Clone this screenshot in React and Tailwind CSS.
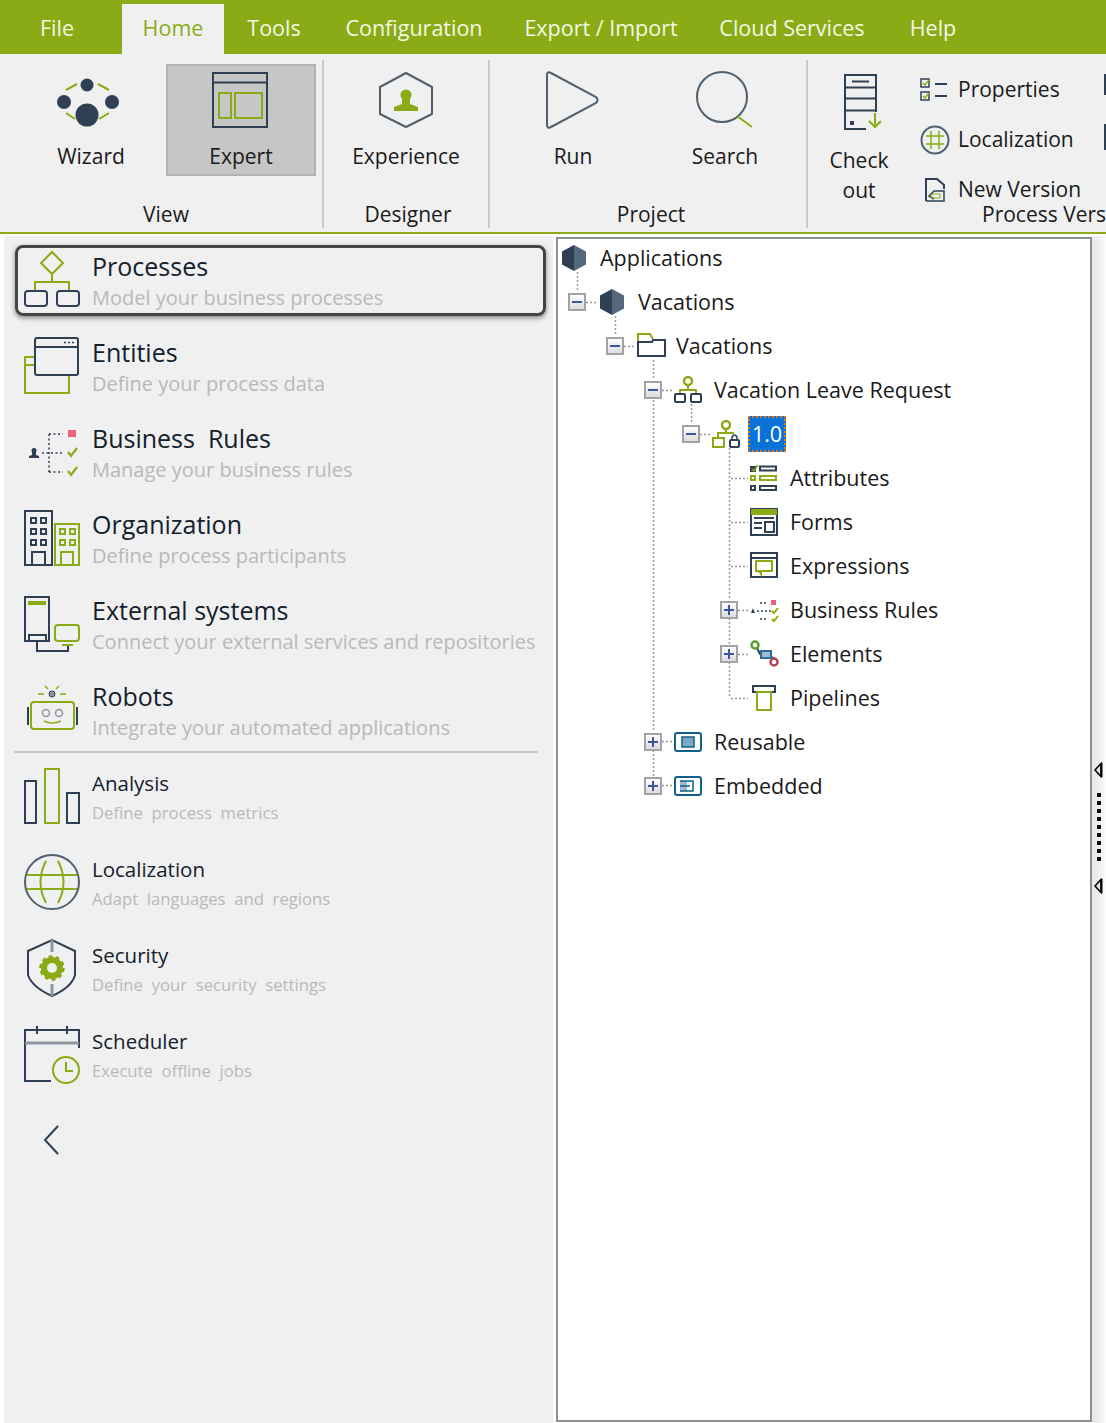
import React from 'react';

const NAVY = '#2f4054';
const GREEN = '#8aab16';
const GRAY = '#8d96a0';
const RING = '#50606f';

const tabs = [
  { label: 'File', w: 'w-[114px] mr-[8px]' },
  { label: 'Home', w: 'w-[102px]', active: true },
  { label: 'Tools', w: 'w-[100px]' },
  { label: 'Configuration', w: 'w-[180px]' },
  { label: 'Export / Import', w: 'w-[194px]' },
  { label: 'Cloud Services', w: 'w-[188px]' },
  { label: 'Help', w: 'w-[94px]' },
];

// Ribbon icons
const WizardIcon = () => (
  <svg width="70" height="60" viewBox="56 70 70 60" fill="none">
    <path d="M66 90 L77 84 M98 84 L109 90 M66 113 L75 119 M99 119 L109 113" stroke={GREEN} strokeWidth="2" />
    <circle cx="87" cy="85" r="6.500" fill={NAVY} />
    <circle cx="64" cy="102" r="7" fill={NAVY} />
    <circle cx="112" cy="102" r="7" fill={NAVY} />
    <circle cx="87" cy="115" r="11.500" fill={NAVY} />
  </svg>
);

const ExpertIcon = () => (
  <svg width="60" height="60" viewBox="211 70 60 60" fill="none">
    <rect x="213" y="73" width="54" height="54" stroke={NAVY} strokeWidth="2" />
    <path d="M213 82.500H267" stroke={NAVY} strokeWidth="2" />
    <rect x="219" y="93" width="12" height="25" stroke={GREEN} strokeWidth="2" />
    <rect x="235" y="93" width="27" height="25" stroke={GREEN} strokeWidth="2" />
  </svg>
);

const ExperienceIcon = () => (
  <svg width="60" height="60" viewBox="376 70 60 60" fill="none">
    <path d="M406 73 L432 87 V114 L406 127 L380 114 V87 Z" stroke={RING} strokeWidth="2" strokeLinejoin="round" />
    <circle cx="406" cy="95" r="5.500" fill={GREEN} />
    <path d="M402 99 H410 V104 L418 107 V111 H394 V107 L402 104 Z" fill={GREEN} />
  </svg>
);

const RunIcon = () => (
  <svg width="60" height="60" viewBox="543 70 60 60" fill="none">
    <path d="M547 75 Q547 71 551 73 L596 97 Q599 100 596 103 L551 127 Q547 129 547 125 Z" stroke={RING} strokeWidth="2" />
  </svg>
);

const SearchIcon = () => (
  <svg width="64" height="60" viewBox="693 70 64 60" fill="none">
    <circle cx="722" cy="97" r="25" stroke={RING} strokeWidth="2" />
    <path d="M737 116 L752 127" stroke={GREEN} strokeWidth="2" />
  </svg>
);

const CheckOutIcon = () => (
  <svg width="44" height="60" viewBox="837 70 44 60" fill="none">
    <path d="M876 112 V75 H845 V129 H866" stroke={NAVY} strokeWidth="2" />
    <path d="M845 87.500 H876 M845 98.500 H876 M845 110.500 H876" stroke={NAVY} strokeWidth="2" />
    <path d="M852 81.500 H869" stroke={NAVY} strokeWidth="2" />
    <rect x="850" y="121" width="4" height="4" fill={NAVY} />
    <path d="M875 113 V127 M869 121 L875 127 L881 121" stroke={GREEN} strokeWidth="2" />
  </svg>
);

const PropertiesIcon = () => (
  <svg width="28" height="24" viewBox="0 0 28 24" fill="none">
    <rect x="1" y="1" width="8" height="8" stroke={NAVY} strokeWidth="1.500" />
    <rect x="1" y="14" width="8" height="8" stroke={NAVY} strokeWidth="1.500" />
    <path d="M3 5 L5 7 L9 2 M3 18 L5 20 L9 15" stroke={GREEN} strokeWidth="1.500" />
    <path d="M15 6 H27 M15 18 H27" stroke={NAVY} strokeWidth="2" />
  </svg>
);

const GlobeSmallIcon = () => (
  <svg width="30" height="30" viewBox="0 0 30 30" fill="none">
    <circle cx="15" cy="15" r="13.500" stroke={RING} strokeWidth="2" />
    <path d="M6 11 H24 M6 19 H24 M11 6 V24 M19 6 V24" stroke={GREEN} strokeWidth="1.500" />
  </svg>
);

const NewVersionIcon = () => (
  <svg width="22" height="26" viewBox="0 0 22 26" fill="none" className="ml-[4px]">
    <path d="M2 24 V2 H13 L20 8 V12" stroke={NAVY} strokeWidth="2" />
    <path d="M2 24 H20 V14 H10 L5 19 L10 22" stroke={NAVY} strokeWidth="1.500" />
    <path d="M9 17 L6 19 L9 21 H16 V17 Z" stroke={GREEN} strokeWidth="1" />
  </svg>
);

const ClippedIcon = ({ h }) => (
  <svg width="10" height={h} fill="none">
    <path d={`M1 0 V${h}`} stroke={NAVY} strokeWidth="3" />
  </svg>
);

// Left panel icons, drawn in row coordinates
const ProcessesIcon = () => (
  <>
    <path d="M30 13 L41 24 L30 35 L19 24 Z" stroke={GREEN} strokeWidth="2" />
    <path d="M30 35 V43 M13 51 V43 H47 V51" stroke={GREEN} strokeWidth="2" />
    <rect x="3" y="52" width="22" height="15" rx="3" stroke={NAVY} strokeWidth="2" />
    <rect x="35" y="52" width="22" height="15" rx="3" stroke={NAVY} strokeWidth="2" />
  </>
);

const EntitiesIcon = () => (
  <>
    <path d="M13 32 H3 V68 H47 V51 M3 40 H13" stroke={GREEN} strokeWidth="2" />
    <rect x="13" y="13" width="43" height="37" rx="2" stroke={NAVY} strokeWidth="2" />
    <path d="M13 22 H56" stroke={NAVY} strokeWidth="2" />
    <path d="M42 17.500 H53" stroke={NAVY} strokeWidth="1.500" strokeDasharray="2 2" />
  </>
);

const RulesIcon = () => (
  <>
    <circle cx="12" cy="39.500" r="2.500" fill={NAVY} />
    <path d="M10 41 H14 V44 L17 45 V47 H7 V45 L10 44 Z" fill={NAVY} />
    <path d="M27 23 V61 M27 23 H41 M20 42 H41 M27 61 H41" stroke={NAVY} strokeWidth="1.500" strokeDasharray="2 2.500" />
    <rect x="46" y="19" width="8" height="7" fill="#e8637e" />
    <path d="M46 41 L49 45 L55 37 M46 60 L49 64 L55 56" stroke={GREEN} strokeWidth="2.200" />
  </>
);

const OrganizationIcon = () => (
  <>
    <rect x="3" y="14" width="27" height="54" stroke={NAVY} strokeWidth="2" />
    <rect x="9" y="21" width="5" height="5" stroke={NAVY} strokeWidth="2" />
    <rect x="19" y="21" width="5" height="5" stroke={NAVY} strokeWidth="2" />
    <rect x="9" y="32" width="5" height="5" stroke={NAVY} strokeWidth="2" />
    <rect x="19" y="32" width="5" height="5" stroke={NAVY} strokeWidth="2" />
    <rect x="9" y="43" width="5" height="5" stroke={NAVY} strokeWidth="2" />
    <rect x="19" y="43" width="5" height="5" stroke={NAVY} strokeWidth="2" />
    <path d="M10 68 V55 H23 V68" stroke={NAVY} strokeWidth="2" />
    <rect x="33" y="27" width="24" height="41" stroke={GREEN} strokeWidth="2" />
    <rect x="38" y="32" width="5" height="5" stroke={GREEN} strokeWidth="2" />
    <rect x="48" y="32" width="5" height="5" stroke={GREEN} strokeWidth="2" />
    <rect x="38" y="43" width="5" height="5" stroke={GREEN} strokeWidth="2" />
    <rect x="48" y="43" width="5" height="5" stroke={GREEN} strokeWidth="2" />
    <path d="M39 68 V55 H51 V68" stroke={GREEN} strokeWidth="2" />
  </>
);

const ExternalIcon = () => (
  <>
    <rect x="3" y="14" width="24" height="44" stroke={NAVY} strokeWidth="2" />
    <rect x="6" y="18" width="18" height="4" fill={GREEN} />
    <path d="M7 58 V52 H24 V58" stroke={NAVY} strokeWidth="2" />
    <path d="M15 58 V68 H46 V62" stroke={NAVY} strokeWidth="2" />
    <rect x="33" y="42" width="24" height="16" rx="3" stroke={GREEN} strokeWidth="2" />
    <path d="M40 62 H51" stroke={GREEN} strokeWidth="2" />
  </>
);

const RobotsIcon = () => (
  <>
    <circle cx="30" cy="25" r="3" fill={GRAY} stroke={NAVY} />
    <path d="M16 25 H22 M38 25 H44 M23 17 L26 20 M37 17 L34 20" stroke={GREEN} strokeWidth="1.500" />
    <rect x="9" y="33" width="43" height="27" rx="3" stroke={GREEN} strokeWidth="2" />
    <path d="M6 38 V56 M55 38 V56" stroke={NAVY} strokeWidth="2" />
    <circle cx="24" cy="44" r="3.500" stroke={GRAY} strokeWidth="1.500" />
    <circle cx="37" cy="44" r="3.500" stroke={GRAY} strokeWidth="1.500" />
    <path d="M22 52 Q30 56 39 52" stroke={GREEN} strokeWidth="1.500" />
  </>
);

const AnalysisIcon = () => (
  <>
    <rect x="3" y="28" width="11" height="42" stroke={NAVY} strokeWidth="2" />
    <rect x="23" y="16" width="14" height="54" stroke={GREEN} strokeWidth="2" />
    <rect x="45" y="40" width="12" height="30" stroke={NAVY} strokeWidth="2" />
  </>
);

const LocalizationIcon = () => (
  <>
    <circle cx="30" cy="43" r="27" stroke={RING} strokeWidth="2" />
    <path d="M5 36 H55 M5 50 H55" stroke={GREEN} strokeWidth="2" />
    <path d="M24 22 Q13 43 24 64 M36 22 Q47 43 36 64" stroke={GREEN} strokeWidth="2" />
  </>
);

const SecurityIcon = () => (
  <>
    <path d="M6 26 L30 15 L53 26 V50 Q50 62 30 71 Q10 62 6 50 Z" stroke={NAVY} strokeWidth="2" />
    <path d="M30 15 V27 M30 59 V71" stroke={GRAY} strokeWidth="3" />
    <circle cx="30" cy="43" r="8" stroke={GREEN} strokeWidth="6" />
    <circle cx="30" cy="43" r="11.500" stroke={GREEN} strokeWidth="2.500" strokeDasharray="4 3.200" />
  </>
);

const SchedulerIcon = () => (
  <>
    <path d="M29 70 H3 V19 H57 V37" stroke={NAVY} strokeWidth="2" />
    <path d="M3 32 H57" stroke={GRAY} strokeWidth="3" />
    <path d="M15 15 V23 M45 15 V23" stroke={NAVY} strokeWidth="2" />
    <circle cx="44" cy="59" r="13" stroke={GREEN} strokeWidth="2" />
    <path d="M44 51 V60 H51" stroke={GREEN} strokeWidth="2" />
  </>
);

const primaryItems = [
  { title: 'Processes', sub: 'Model your business processes', Icon: ProcessesIcon, selected: true },
  { title: 'Entities', sub: 'Define your process data', Icon: EntitiesIcon },
  { title: 'Business  Rules', sub: 'Manage your business rules', Icon: RulesIcon },
  { title: 'Organization', sub: 'Define process participants', Icon: OrganizationIcon },
  { title: 'External systems', sub: 'Connect your external services and repositories', Icon: ExternalIcon },
  { title: 'Robots', sub: 'Integrate your automated applications', Icon: RobotsIcon },
];

const secondaryItems = [
  { title: 'Analysis', sub: 'Define  process  metrics', Icon: AnalysisIcon },
  { title: 'Localization', sub: 'Adapt  languages  and  regions', Icon: LocalizationIcon },
  { title: 'Security', sub: 'Define  your  security  settings', Icon: SecurityIcon },
  { title: 'Scheduler', sub: 'Execute  offline  jobs', Icon: SchedulerIcon },
];

// Tree icons, 32 wide and centered in the row
const Hexagon = () => (
  <svg width="32" height="30" viewBox="0 0 32 30">
    <path d="M16 2 L28 8.500 V21.500 L16 28 Z" fill="#55687b" />
    <path d="M16 2 L4 8.500 V21.500 L16 28 Z" fill={NAVY} />
  </svg>
);

const FolderIcon = () => (
  <svg width="32" height="30" viewBox="0 0 32 30" fill="none">
    <path d="M4 11 V3 H16 L19 8" stroke={GREEN} strokeWidth="2" />
    <path d="M4 11 H18 L19 9 H31 V25 H4 Z" stroke={NAVY} strokeWidth="2" />
  </svg>
);

const ProcessTreeIcon = () => (
  <svg width="32" height="30" viewBox="0 0 32 30" fill="none">
    <circle cx="16" cy="6" r="4" stroke={GREEN} strokeWidth="2.500" />
    <path d="M16 10 V15 M8 19 V15 H24 V19" stroke={GREEN} strokeWidth="2" />
    <rect x="3" y="19" width="10" height="8" rx="1" stroke={NAVY} strokeWidth="2" />
    <rect x="19" y="19" width="10" height="8" rx="1" stroke={NAVY} strokeWidth="2" />
  </svg>
);

const LockedProcessIcon = () => (
  <svg width="32" height="30" viewBox="0 0 32 30" fill="none">
    <circle cx="16" cy="6" r="4" stroke={GREEN} strokeWidth="2.500" />
    <path d="M16 10 V14 M8 19 V14 H24" stroke={GREEN} strokeWidth="2" />
    <rect x="3" y="19" width="11" height="9" stroke={GREEN} strokeWidth="2" />
    <rect x="20" y="21" width="9" height="7" rx="1" stroke={NAVY} strokeWidth="2" />
    <path d="M22 21 V18 Q24.500 14 27 18 V21" stroke={NAVY} strokeWidth="1.500" />
  </svg>
);

const AttributesIcon = () => (
  <svg width="32" height="30" viewBox="0 0 32 30" fill="none">
    <path d="M2 3 H8 V9 H2 Z" fill={NAVY} />
    <path d="M4 6 L6 8 L10 2" stroke={GREEN} strokeWidth="1.500" />
    <rect x="12" y="3.500" width="16" height="4" stroke={NAVY} strokeWidth="2" />
    <rect x="3" y="13" width="4" height="4" stroke={GREEN} strokeWidth="2" />
    <rect x="12" y="13" width="16" height="4" stroke={GREEN} strokeWidth="2" />
    <rect x="3" y="23" width="4" height="4" stroke={NAVY} strokeWidth="2" />
    <rect x="12" y="23" width="16" height="4" stroke={NAVY} strokeWidth="2" />
  </svg>
);

const FormsIcon = () => (
  <svg width="32" height="30" viewBox="0 0 32 30" fill="none">
    <rect x="3" y="2" width="26" height="26" stroke={NAVY} strokeWidth="2" />
    <rect x="3" y="2" width="26" height="6" fill={GREEN} />
    <path d="M6 11 H26 M6 16 H14 M6 21 H14" stroke={NAVY} strokeWidth="2" />
    <rect x="17" y="15" width="9" height="10" stroke={NAVY} strokeWidth="2" />
  </svg>
);

const ExpressionsIcon = () => (
  <svg width="32" height="30" viewBox="0 0 32 30" fill="none">
    <rect x="3" y="2" width="26" height="24" stroke={NAVY} strokeWidth="2" />
    <path d="M3 7 H29" stroke={NAVY} strokeWidth="2" />
    <path d="M8 10 H24 V20 H13 V23 L11 20 H8 Z" stroke={GREEN} strokeWidth="2" />
  </svg>
);

const RulesTreeIcon = () => (
  <svg width="32" height="30" viewBox="0 0 32 30" fill="none">
    <path d="M3 18 L5 13 L7 18 Z" fill={NAVY} />
    <path d="M12 8 H20 M9 16 H23 M12 24 H20" stroke={NAVY} strokeWidth="1.500" strokeDasharray="2 2" />
    <rect x="23" y="5" width="5" height="5" fill="#e8637e" />
    <path d="M24 16 L26 18 L30 13 M24 24 L26 26 L30 21" stroke={GREEN} strokeWidth="2" />
  </svg>
);

const ElementsIcon = () => (
  <svg width="32" height="30" viewBox="0 0 32 30" fill="none">
    <path d="M9 9 L12 15 H16 M24 18 L26 20" stroke={NAVY} strokeWidth="2" />
    <circle cx="7" cy="6" r="3.500" stroke="#5d9e2c" strokeWidth="2.500" />
    <rect x="13" y="12" width="10" height="7" stroke="#2c6c9c" strokeWidth="2" fill="#9dbcd2" />
    <circle cx="26" cy="23" r="3.500" stroke="#b8434f" strokeWidth="2.500" />
  </svg>
);

const PipelinesIcon = () => (
  <svg width="32" height="30" viewBox="0 0 32 30" fill="none">
    <rect x="5" y="3" width="22" height="6" stroke={NAVY} strokeWidth="2" />
    <rect x="9" y="9" width="14" height="18" stroke={GREEN} strokeWidth="2" />
  </svg>
);

const ReusableIcon = () => (
  <svg width="32" height="30" viewBox="0 0 32 30" fill="none">
    <rect x="3" y="6" width="26" height="18" rx="2" stroke="#0f5f8f" strokeWidth="2" />
    <rect x="10" y="10" width="12" height="10" stroke="#0f5f8f" strokeWidth="1.500" fill="#7fa8c4" />
  </svg>
);

const EmbeddedIcon = () => (
  <svg width="32" height="30" viewBox="0 0 32 30" fill="none">
    <rect x="3" y="6" width="26" height="18" rx="2" stroke="#0f5f8f" strokeWidth="2" />
    <rect x="8" y="10" width="7" height="10" fill="#9dbcd2" />
    <path d="M8 10 H21 V20 H8 M8 15 H18" stroke="#0f5f8f" strokeWidth="1.500" />
  </svg>
);

const treeRows = [
  { label: 'Applications', pl: 'pl-0', Icon: Hexagon, root: true },
  { label: 'Vacations', pl: 'pl-[10px]', Icon: Hexagon, toggle: '-' },
  { label: 'Vacations', pl: 'pl-[48px]', Icon: FolderIcon, toggle: '-' },
  { label: 'Vacation Leave Request', pl: 'pl-[86px]', Icon: ProcessTreeIcon, toggle: '-' },
  { label: '1.0', pl: 'pl-[124px]', Icon: LockedProcessIcon, toggle: '-', selected: true },
  { label: 'Attributes', pl: 'pl-[162px]', Icon: AttributesIcon },
  { label: 'Forms', pl: 'pl-[162px]', Icon: FormsIcon },
  { label: 'Expressions', pl: 'pl-[162px]', Icon: ExpressionsIcon },
  { label: 'Business Rules', pl: 'pl-[162px]', Icon: RulesTreeIcon, toggle: '+' },
  { label: 'Elements', pl: 'pl-[162px]', Icon: ElementsIcon, toggle: '+' },
  { label: 'Pipelines', pl: 'pl-[162px]', Icon: PipelinesIcon },
  { label: 'Reusable', pl: 'pl-[86px]', Icon: ReusableIcon, toggle: '+' },
  { label: 'Embedded', pl: 'pl-[86px]', Icon: EmbeddedIcon, toggle: '+' },
];

const RibbonButton = ({ label, active, w, children }) => (
  <div className={`${w} h-[112px] flex flex-col items-center pt-[4px] border-2 ${active ? 'bg-[#c6c6c6] border-[#b2b2b2]' : 'border-transparent'}`}>
    <div className="h-[60px] flex items-center justify-center">{children}</div>
    <span className="mt-[14px] leading-[24px]">{label}</span>
  </div>
);

const RibbonGroup = ({ label, w, pl, children, labelClass }) => (
  <div className={`${w} ${pl} shrink-0 flex flex-col`}>
    <div className="flex h-[139px] pt-[4px]">{children}</div>
    <div className={`leading-[30px] whitespace-nowrap ${labelClass}`}>{label}</div>
  </div>
);

const Separator = () => <div className="w-[2px] shrink-0 h-[168px] bg-[#cbcbcb]" />;

const SmallAction = ({ label, children }) => (
  <div className="flex items-center h-[50px] shrink-0">
    <div className="w-[38px] flex justify-start">{children}</div>
    <span className="whitespace-nowrap">{label}</span>
  </div>
);

const NavRow = ({ item, rowClass, paddingClass, titleClass, subClass }) => (
  <div className={`relative flex pl-[18px] ${rowClass}`}>
    {item.selected && (
      <div className="absolute left-[11px] top-[6px] w-[531px] h-[71px] border-[3px] border-[#454545] rounded-[8px] shadow-[0_2px_5px_rgba(0,0,0,0.45)]" />
    )}
    <svg width="60" height="86" viewBox="0 0 60 86" fill="none" className="shrink-0">
      <item.Icon />
    </svg>
    <div className={`ml-[10px] whitespace-pre ${paddingClass}`}>
      <div className={titleClass}>{item.title}</div>
      <div className={subClass}>{item.sub}</div>
    </div>
  </div>
);

const Toggle = ({ sign }) => (
  <div className="w-[18px] h-[18px] border-2 border-[#a3a3a3] bg-gradient-to-b from-white to-[#dcdcdc] relative">
    <div className="absolute left-[2px] top-[6px] w-[10px] h-[2px] bg-[#3c55a5]" />
    {sign === '+' && <div className="absolute left-[6px] top-[2px] w-[2px] h-[10px] bg-[#3c55a5]" />}
  </div>
);

const TreeRow = ({ row }) => (
  <div className={`h-[44px] flex items-center ${row.pl}`}>
    {!row.root && (
      <div className="w-[28px] shrink-0">
        {row.toggle && <Toggle sign={row.toggle} />}
      </div>
    )}
    <div className="w-[32px] shrink-0 flex"><row.Icon /></div>
    {row.selected ? (
      <span className="ml-[6px] w-[38px] h-[36px] leading-[32px] text-center bg-[#0a72d6] text-white border-2 border-dotted border-[#d9791a]">{row.label}</span>
    ) : (
      <span className="ml-[10px] whitespace-nowrap">{row.label}</span>
    )}
  </div>
);

// Dotted connectors of the tree, in page coordinates
const TreeLines = () => (
  <svg className="absolute left-0 top-0" width="534" height="1183" viewBox="558 239 534 1183" fill="none">
    <path
      d="M577.500 272V292 M586 302.500H598 M615.500 316V336 M624 346.500H636 M653.500 360V380 M662 390.500H674 M653.500 400V732 M653.500 750V776 M662 741.500H672 M662 785.500H672 M691.500 404V424 M700 434.500H710 M729.500 448V600 M729.500 618V644 M729.500 662V698 M731 478.500H748 M731 522.500H748 M731 566.500H748 M738 610.500H748 M738 654.500H748 M731 698.500H748"
      stroke="#9a9a9a"
      strokeWidth="1.500"
      strokeDasharray="2 2"
    />
  </svg>
);

const SplitterArrow = () => (
  <svg width="10" height="16" viewBox="0 0 10 16" fill="#e4e4e4">
    <path d="M8 1.500 L2 8 L8 14.500 Z" stroke="#000" strokeWidth="1.500" />
    <path d="M8.500 1 V15" stroke="#000" strokeWidth="2" />
  </svg>
);

const App = () => {
  return (
    <div className="w-[1106px] h-[1423px] overflow-hidden bg-white font-['Open_Sans','Noto_Sans',sans-serif] text-[#1a1a1a] text-[21px]">
      {/* Menu bar */}
      <div className="h-[54px] bg-[#8aab16] flex items-end text-[21.5px]">
        {tabs.map((tab) => (
          <div
            key={tab.label}
            className={`${tab.w} h-[50px] pb-[2px] flex items-center justify-center whitespace-nowrap ${tab.active ? 'bg-[#f0f0f0] text-[#8aab16]' : 'text-[#f4f7e4]'}`}
          >
            {tab.label}
          </div>
        ))}
      </div>

      {/* Ribbon */}
      <div className="h-[180px] bg-[#f0f0f0] border-b-2 border-[#8aab16] flex items-start pt-[6px] overflow-hidden">
        <RibbonGroup label="View" w="w-[322px]" pl="pl-[16px]" labelClass="text-center pr-[6px]">
          <RibbonButton label="Wizard" w="w-[150px]"><WizardIcon /></RibbonButton>
          <RibbonButton label="Expert" w="w-[150px]" active><ExpertIcon /></RibbonButton>
        </RibbonGroup>
        <Separator />
        <RibbonGroup label="Designer" w="w-[164px]" pl="pl-0" labelClass="text-center pl-[4px]">
          <RibbonButton label="Experience" w="w-[164px]"><ExperienceIcon /></RibbonButton>
        </RibbonGroup>
        <Separator />
        <RibbonGroup label="Project" w="w-[316px]" pl="pl-0" labelClass="text-center pl-[6px]">
          <RibbonButton label="Run" w="w-[166px]"><RunIcon /></RibbonButton>
          <RibbonButton label="Search" w="w-[138px]"><SearchIcon /></RibbonButton>
        </RibbonGroup>
        <Separator />
        <RibbonGroup label="Process Version" w="w-[400px]" pl="pl-0" labelClass="pl-[174px]">
          <div className="w-[102px] h-[134px] flex flex-col items-center pt-[6px]">
            <div className="h-[60px] flex items-center justify-center"><CheckOutIcon /></div>
            <span className="mt-[15px] leading-[30px] text-center w-[70px]">Check out</span>
          </div>
          <div className="ml-[10px] w-[184px] mt-[1px] flex flex-col">
            <SmallAction label="Properties"><PropertiesIcon /></SmallAction>
            <SmallAction label="Localization"><GlobeSmallIcon /></SmallAction>
            <SmallAction label="New Version"><NewVersionIcon /></SmallAction>
          </div>
          <div className="flex flex-col gap-[29px] pt-[10px]">
            <ClippedIcon h={21} />
            <ClippedIcon h={26} />
          </div>
        </RibbonGroup>
      </div>

      {/* Body */}
      <div className="flex h-[1189px] pt-[2px]">
        <div className="w-[4px] shrink-0" />
        <div className="w-[549px] shrink-0 bg-[#f0f0f0] pt-[3px] h-[1189px]">
          <div>
            {primaryItems.map((item, i) => (
              <NavRow
                key={item.title}
                item={item}
                rowClass={i === 5 ? 'h-[82px]' : 'h-[86px]'}
                paddingClass="pt-[12px]"
                titleClass="text-[25px] leading-[31px] text-[#14202c]"
                subClass="text-[20px] leading-[31px] text-[#b9b9b9]"
              />
            ))}
          </div>
          <div className="ml-[10px] w-[524px] h-[2px] bg-[#c9c9c9]" />
          <div>
            {secondaryItems.map((item) => (
              <NavRow
                key={item.title}
                item={item}
                rowClass="h-[86px]"
                paddingClass="pt-[16px]"
                titleClass="text-[20.5px] leading-[29px] text-[#14202c]"
                subClass="text-[16.7px] leading-[29px] text-[#b9b9b9]"
              />
            ))}
          </div>
          <div className="mt-[27px] ml-[38px]">
            <svg width="20" height="32" viewBox="0 0 20 32" fill="none">
              <path d="M16 2 L3 16 L16 30" stroke={NAVY} strokeWidth="2" />
            </svg>
          </div>
        </div>
        <div className="w-[3px] shrink-0" />

        {/* Project tree */}
        <div className="relative w-[536px] shrink-0 h-[1185px] mt-[1px] border-2 border-[#8b9098] bg-white text-[21.5px]">
          <TreeLines />
          <div className="relative -mt-[3px]">
            {treeRows.map((row, i) => (
              <TreeRow key={i} row={row} />
            ))}
          </div>
        </div>

        {/* Splitter */}
        <div className="relative w-[14px] shrink-0 h-[1187px] bg-gradient-to-r from-[#e6e6e6] to-[#fafafa]">
          <div className="absolute left-[1px] top-[526px]"><SplitterArrow /></div>
          <div className="absolute left-[5px] top-[557px] flex flex-col gap-[4px]">
            {Array.from({ length: 9 }).map((_, i) => (
              <div key={i} className="w-[4px] h-[4px] bg-black" />
            ))}
          </div>
          <div className="absolute left-[1px] top-[642px]"><SplitterArrow /></div>
        </div>
      </div>
    </div>
  );
};

export default App;
